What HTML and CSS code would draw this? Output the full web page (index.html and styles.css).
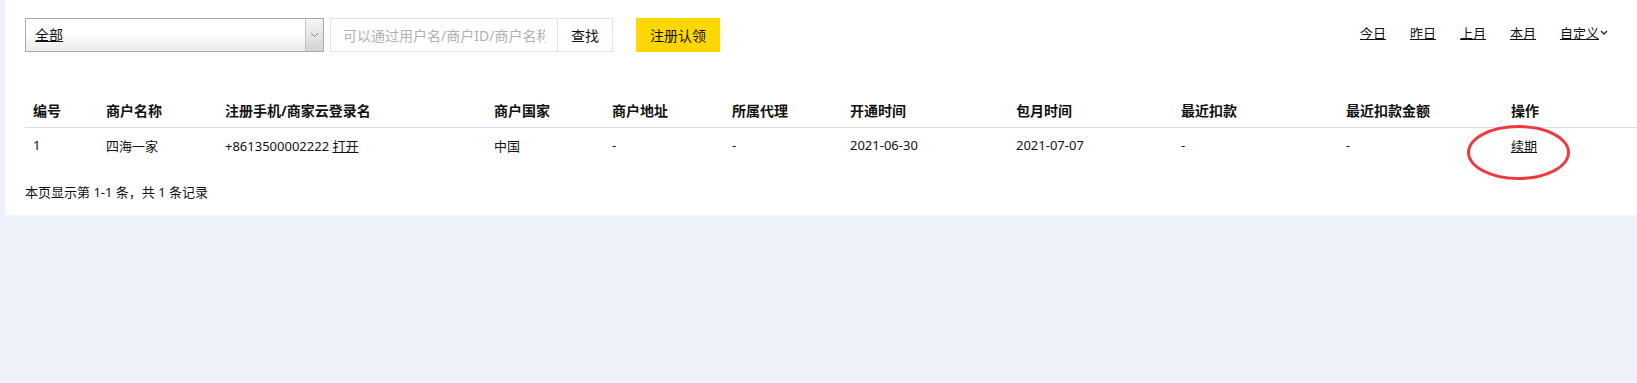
FILE: index.html
```html
<!DOCTYPE html>
<html lang="zh-CN">
<head>
  <meta charset="UTF-8">
  <title>商户列表</title>
  <link rel="stylesheet" href="styles.css">
</head>
<body>

  <div class="panel">
    <div class="toolbar">
      <div class="fake-select">
        <span class="fake-select-text">全部</span>
        <span class="fake-select-arrow">
          <svg width="9" height="6" viewBox="0 0 9 6"><path d="M1 1 L4.5 4.5 L8 1" fill="none" stroke="#8a8a8a" stroke-width="1"/></svg>
        </span>
      </div>
      <div class="search">
        <input type="text" placeholder="可以通过用户名/商户ID/商户名称">
        <button class="search-btn">查找</button>
      </div>
      <button class="claim-btn">注册认领</button>

      <div class="date-links">
        <a href="#">今日</a>
        <a href="#">昨日</a>
        <a href="#">上月</a>
        <a href="#">本月</a>
        <a href="#" class="custom">自定义<svg width="8" height="6" viewBox="0 0 8 6"><path d="M1 1 L4 4 L7 1" fill="none" stroke="#222" stroke-width="1.3"/></svg></a>
      </div>
    </div>

    <table class="list">
      <colgroup>
        <col style="width:73px">
        <col style="width:119px">
        <col style="width:269px">
        <col style="width:118px">
        <col style="width:120px">
        <col style="width:118px">
        <col style="width:166px">
        <col style="width:165px">
        <col style="width:165px">
        <col style="width:165px">
        <col>
      </colgroup>
      <thead>
        <tr>
          <th>编号</th>
          <th>商户名称</th>
          <th>注册手机/商家云登录名</th>
          <th>商户国家</th>
          <th>商户地址</th>
          <th>所属代理</th>
          <th>开通时间</th>
          <th>包月时间</th>
          <th>最近扣款</th>
          <th>最近扣款金额</th>
          <th>操作</th>
        </tr>
      </thead>
      <tbody>
        <tr>
          <td>1</td>
          <td>四海一家</td>
          <td>+8613500002222 <a href="#">打开</a></td>
          <td>中国</td>
          <td>-</td>
          <td>-</td>
          <td>2021-06-30</td>
          <td>2021-07-07</td>
          <td>-</td>
          <td>-</td>
          <td class="op"><a href="#">续期</a><span class="mark"></span></td>
        </tr>
      </tbody>
    </table>

    <p class="pager-info">本页显示第 1-1 条，共 1 条记录</p>
  </div>

</body>
</html>
```

FILE: styles.css
```css
body {
  margin: 0;
  background: #eef2fa;
  font-family: "Noto Sans", "Noto Sans CJK SC", sans-serif;
  font-size: 13px;
  color: #111;
}
a {
  color: #111;
}
.panel {
  margin-left: 5px;
  background: #fff;
  padding: 18px 0 13px 20px;
}
.toolbar {
  display: flex;
  align-items: center;
  height: 34px;
  padding-right: 29px;
}
.fake-select {
  display: flex;
  width: 297px;
  height: 32px;
  border: 1px solid #a8a8a8;
  background: linear-gradient(#fff 40%, #ececec);
}
.fake-select-text {
  flex: 1;
  padding-left: 9px;
  font-size: 14px;
  line-height: 32px;
  text-decoration: underline;
}
.fake-select-arrow {
  width: 17px;
  border-left: 1px solid #c4c4c4;
  background: linear-gradient(#f6f6f6, #d4d4d4);
  display: flex;
  align-items: center;
  justify-content: center;
}
.search {
  display: flex;
  margin-left: 6px;
  height: 34px;
}
.search input {
  box-sizing: border-box;
  width: 228px;
  height: 34px;
  border: 1px solid #e3e3e3;
  padding: 0 12px;
  font-family: inherit;
  font-size: 14px;
  outline: none;
}
.search input::placeholder {
  color: #b0b0b0;
}
.search-btn {
  box-sizing: border-box;
  width: 55px;
  height: 34px;
  border: 1px solid #e3e3e3;
  border-left: none;
  background: #fff;
  font-family: inherit;
  font-size: 14px;
  color: #111;
  padding: 0;
}
.claim-btn {
  margin-left: 23px;
  width: 84px;
  height: 34px;
  border: none;
  background: #ffd700;
  font-family: inherit;
  font-size: 14px;
  color: #111;
  padding: 0;
}
.date-links {
  margin-left: auto;
  display: flex;
  gap: 24px;
  line-height: 20px;
  margin-top: -4px;
}
.date-links a {
  font-size: 13px;
}
.date-links .custom svg {
  margin-left: 1px;
  vertical-align: 2px;
}
.list {
  width: 100%;
  margin-top: 41px;
  border-collapse: collapse;
  table-layout: fixed;
}
.list th {
  height: 34px;
  padding: 0 0 0 8px;
  text-align: left;
  font-size: 14px;
  font-weight: bold;
  border-bottom: 1px solid #dcdcdc;
}
.list td {
  height: 34px;
  padding: 0 0 0 8px;
  font-size: 13px;
}
.list td.op {
  position: relative;
}
.mark {
  position: absolute;
  left: -36px;
  top: -3px;
  width: 97px;
  height: 49px;
  border: 3px solid #f2383c;
  border-radius: 50%;
}
.pager-info {
  margin: 20px 0 0;
  line-height: 20px;
  font-size: 13px;
}
```
